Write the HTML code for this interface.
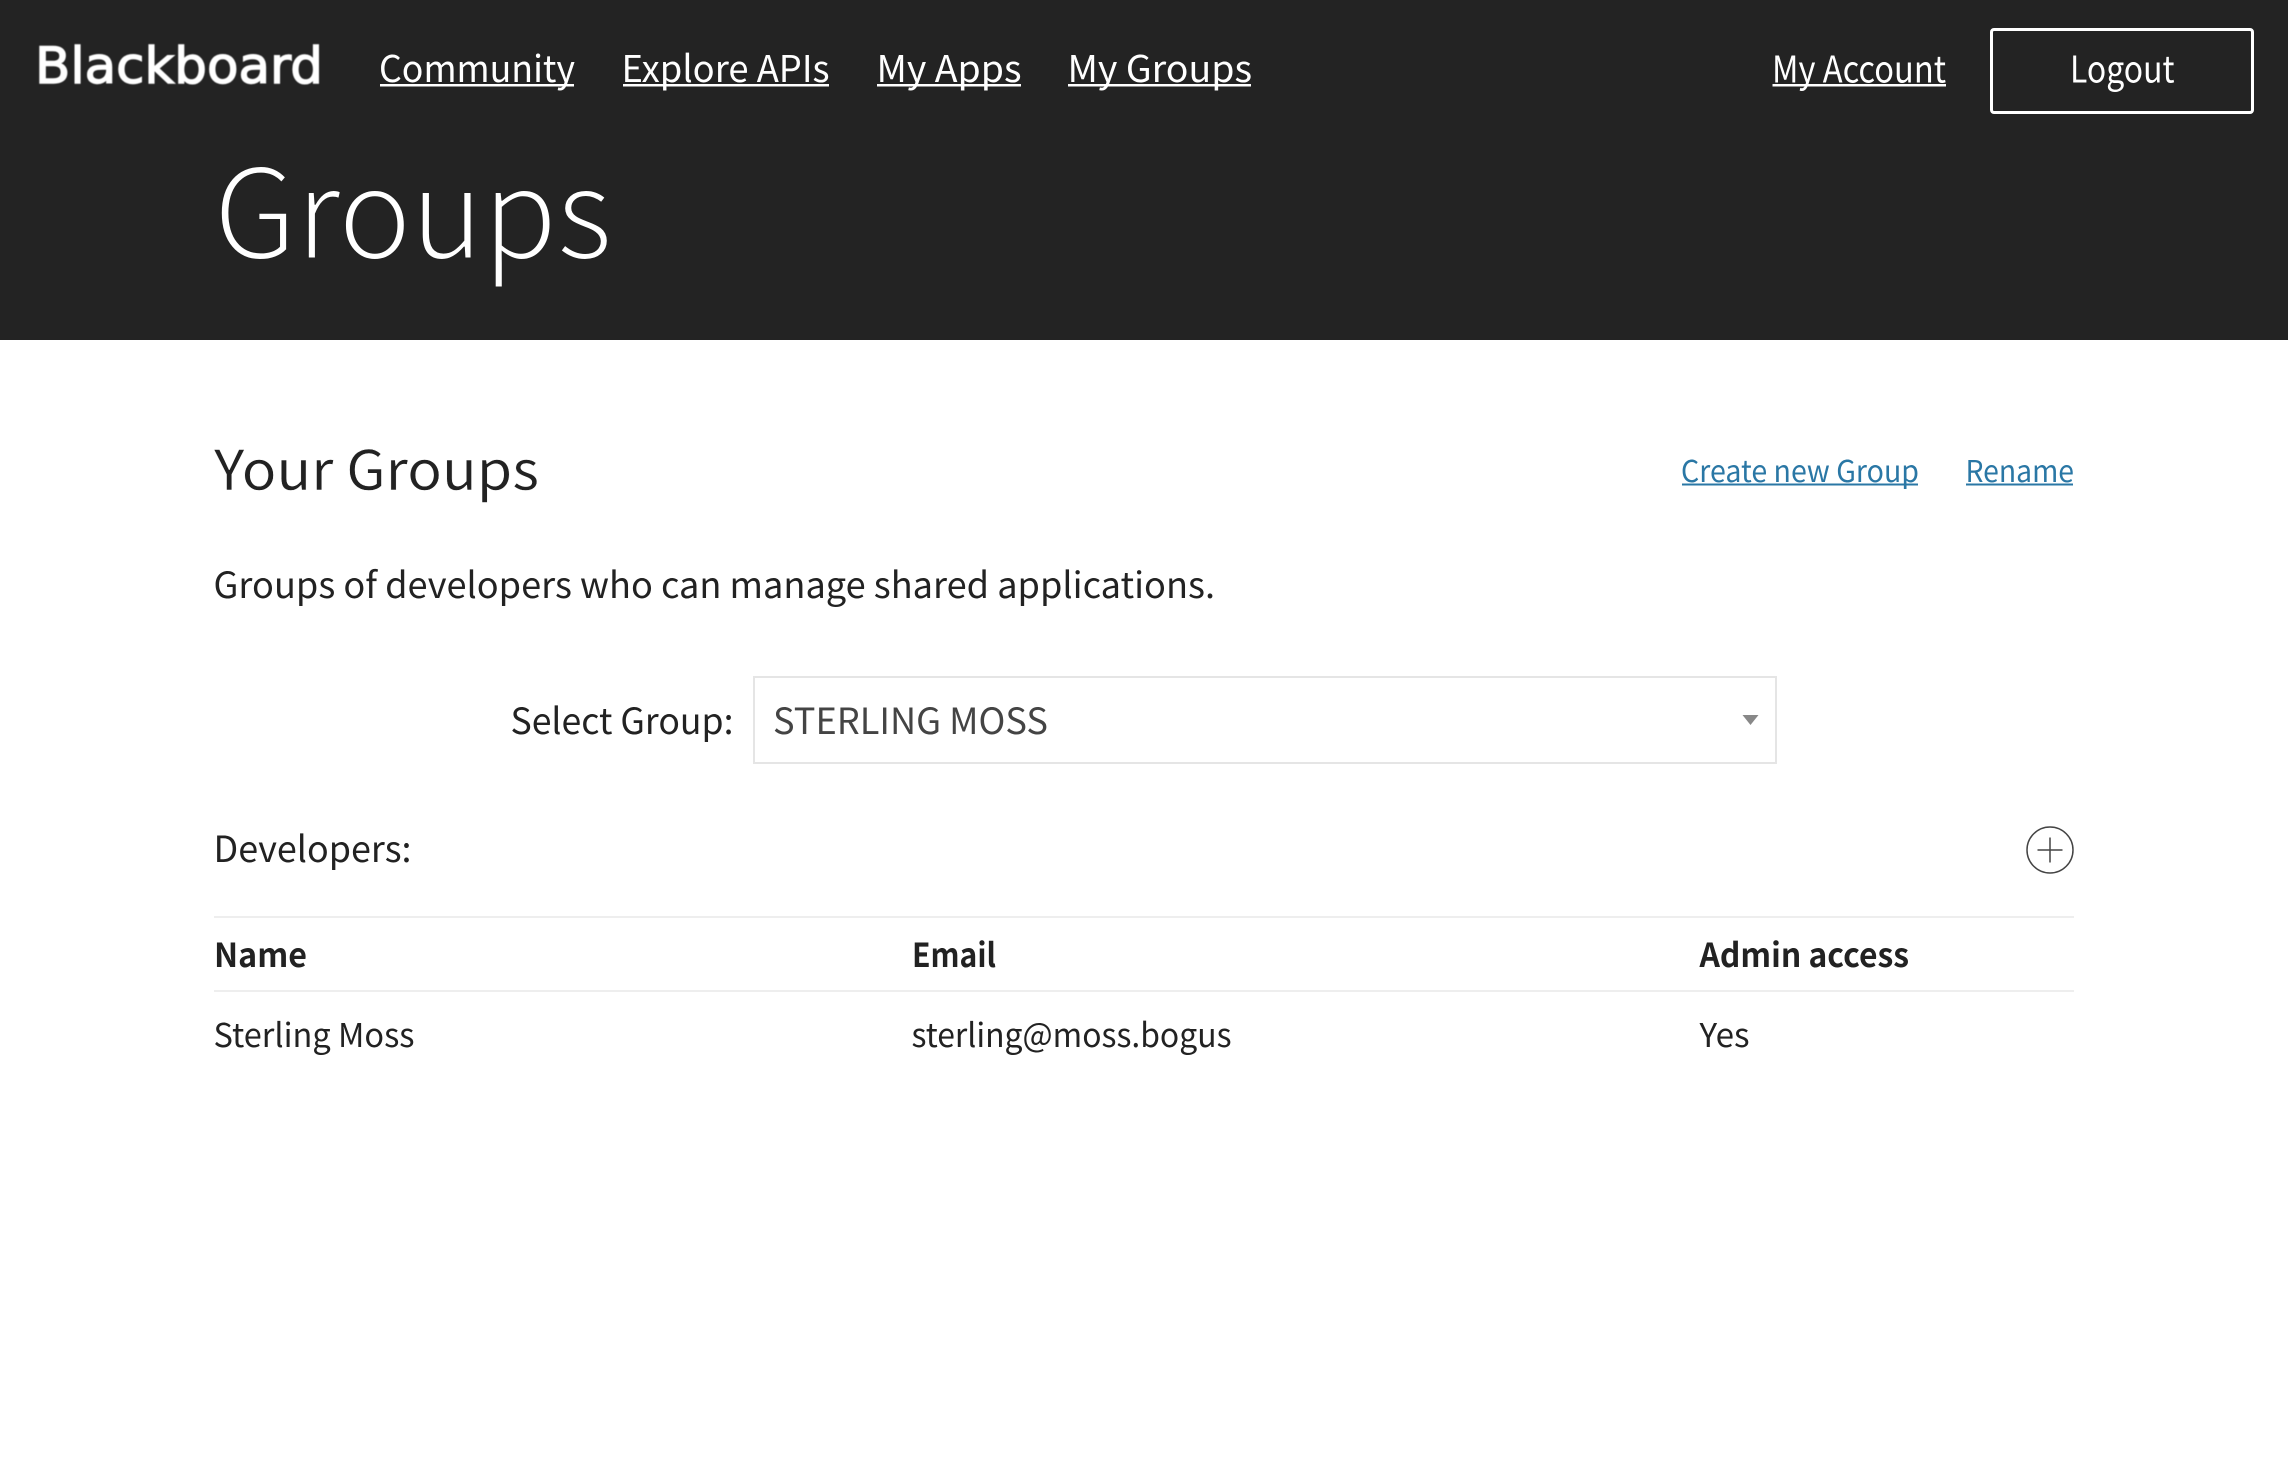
<!DOCTYPE html>
<html lang="en">
<head>
<meta charset="utf-8">
<title>Groups</title>
<style>
html,body{margin:0;padding:0;background:#fff;width:2288px;height:1465px;overflow:hidden}
svg{display:block}
text{font-family:"Noto Sans CJK JP","Liberation Sans",sans-serif;white-space:pre}
.nav{font-size:37px;fill:#fff}
.dark{fill:#222}
.link{font-size:30px;fill:#2a77a5}
</style>
</head>
<body>
<svg width="2288" height="1465" viewBox="0 0 2288 1465" xmlns="http://www.w3.org/2000/svg">
<rect x="0" y="0" width="2288" height="340" fill="#232323"/>

<text x="35" y="83" font-size="50" fill="#fff" stroke="#fff" stroke-width="1.4" textLength="288" lengthAdjust="spacingAndGlyphs" style="font-family:'DejaVu Sans',sans-serif;filter:blur(.5px)">Blackboard</text>

<text class="nav" x="379" y="82" textLength="196" lengthAdjust="spacingAndGlyphs">Community</text>
<rect x="380" y="84" width="194" height="2.5" fill="#fff"/>
<text class="nav" x="621.500" y="82" textLength="208" lengthAdjust="spacingAndGlyphs">Explore APIs</text>
<rect x="623" y="84" width="206" height="2.5" fill="#fff"/>
<text class="nav" x="876.500" y="82" textLength="145" lengthAdjust="spacingAndGlyphs">My Apps</text>
<rect x="877" y="84" width="144" height="2.5" fill="#fff"/>
<text class="nav" x="1067.500" y="82" textLength="184.500" lengthAdjust="spacingAndGlyphs">My Groups</text>
<rect x="1068" y="84" width="183" height="2.5" fill="#fff"/>
<text class="nav" x="1772" y="82.500" textLength="174" lengthAdjust="spacingAndGlyphs">My Account</text>
<rect x="1772.5" y="84" width="173.5" height="2.5" fill="#fff"/>

<rect x="1991.5" y="29.5" width="261" height="83" rx="2.5" fill="none" stroke="#fff" stroke-width="3"/>
<text class="nav" x="2070" y="82.500" textLength="104.500" lengthAdjust="spacingAndGlyphs">Logout</text>

<text x="214" y="258" font-size="123" font-weight="300" fill="#fff" stroke="#232323" stroke-width="1" textLength="398" lengthAdjust="spacingAndGlyphs">Groups</text>

<text class="dark" x="214" y="490" font-size="55" font-weight="400" stroke="#fff" stroke-width="0.4" textLength="325" lengthAdjust="spacingAndGlyphs">Your Groups</text>

<text class="link" x="1681" y="482" textLength="238" lengthAdjust="spacingAndGlyphs">Create new Group</text>
<rect x="1682" y="483.5" width="236" height="2" fill="#2a77a5"/>
<text class="link" x="1965.500" y="482" textLength="108.500" lengthAdjust="spacingAndGlyphs">Rename</text>
<rect x="1966" y="483.5" width="107" height="2" fill="#2a77a5"/>

<text class="dark" x="213.500" y="598" font-size="36" textLength="1001.500" lengthAdjust="spacingAndGlyphs">Groups of developers who can manage shared applications.</text>

<text class="dark" x="510.500" y="734" font-size="36" textLength="223" lengthAdjust="spacingAndGlyphs">Select Group:</text>

<rect x="754" y="677" width="1022" height="86" fill="#fff" stroke="#e5e5e5" stroke-width="2"/>
<text x="773" y="734" font-size="36" fill="#444" textLength="275" lengthAdjust="spacingAndGlyphs">STERLING MOSS</text>
<path d="M1742.500 715H1758.500L1750.500 725Z" fill="#888"/>

<text class="dark" x="213.500" y="862" font-size="36" textLength="198" lengthAdjust="spacingAndGlyphs">Developers:</text>

<circle cx="2050" cy="850" r="23" fill="none" stroke="#444" stroke-width="1.5"/>
<path d="M2037.500 850H2062.500M2050 837.500V862.500" fill="none" stroke="#444" stroke-width="1.5"/>

<rect x="214" y="916" width="1860" height="2" fill="#eee"/>

<g font-size="33" font-weight="700" class="dark">
<text x="214" y="967" class="dark" textLength="93" lengthAdjust="spacingAndGlyphs">Name</text>
<text x="912" y="967" class="dark" textLength="84" lengthAdjust="spacingAndGlyphs">Email</text>
<text x="1699.500" y="967" class="dark" textLength="209.500" lengthAdjust="spacingAndGlyphs">Admin access</text>
</g>

<rect x="214" y="990" width="1860" height="2" fill="#eee"/>

<g font-size="33">
<text x="213.500" y="1047" class="dark" textLength="201" lengthAdjust="spacingAndGlyphs">Sterling Moss</text>
<text x="911.500" y="1047" class="dark" textLength="320" lengthAdjust="spacingAndGlyphs">sterling@moss.bogus</text>
<text x="1699.500" y="1047" class="dark" textLength="50" lengthAdjust="spacingAndGlyphs">Yes</text>
</g>
</svg>
</body>
</html>
